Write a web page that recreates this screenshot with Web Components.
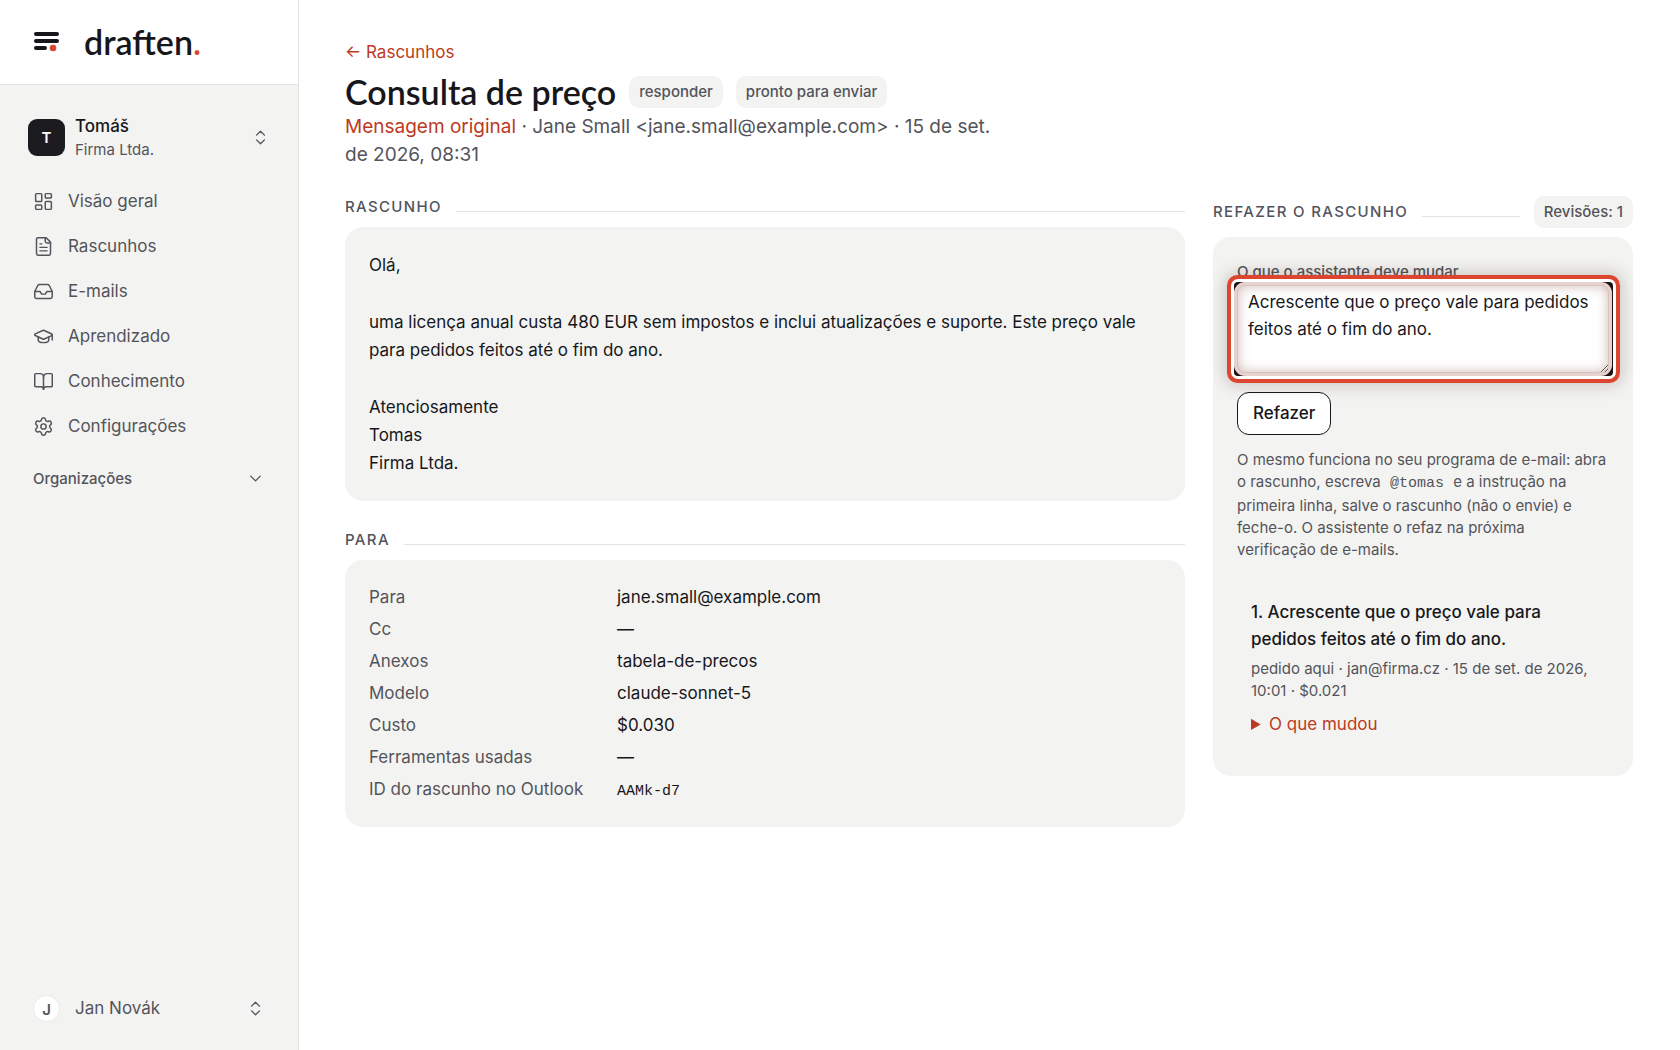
<!DOCTYPE html>
<html lang="pt-BR">
<head>
<meta charset="utf-8">
<meta name="viewport" content="width=device-width, initial-scale=1">
<title>Consulta de preço · draften</title>
<style>
  :root {
    --ink: #17171b;
    --muted: #53545b;
    --surface: #f3f3f1;
    --line: #e4e4e1;
    --accent: #bd3a22;
    --brand: #dc4530;
    --ui: Inter, "Liberation Sans", sans-serif;
    --display: Lato, Inter, sans-serif;
    --mono: "Liberation Mono", monospace;
  }
  body { margin: 0; background: #fff; color: var(--ink); font: 400 17px/27px var(--ui); }
</style>
</head>
<body>
<draft-app>
  <app-sidebar slot="sidebar"></app-sidebar>
  <page-header slot="header"></page-header>
  <section-card heading="Rascunho" slot="main"><draft-body></draft-body></section-card>
  <section-card heading="Para" slot="main"><draft-facts></draft-facts></section-card>
  <section-card heading="Refazer o rascunho" slot="aside">
    <text-pill slot="badge">Revisões: 1</text-pill>
    <redo-form></redo-form>
    <revision-item></revision-item>
  </section-card>
</draft-app>

<script>
const define = (name, html) => {
  const template = document.createElement('template');
  template.innerHTML = '<style>*{box-sizing:border-box}a{color:inherit;text-decoration:none}</style>' + html;
  customElements.define(name, class extends HTMLElement {
    constructor() {
      super();
      this.attachShadow({ mode: 'open' }).append(template.content.cloneNode(true));
    }
    connectedCallback() {
      const title = this.shadowRoot.querySelector('[data-heading]');
      if (title) title.textContent = this.getAttribute('heading');
    }
  });
};

const ICONS = {
  dashboard: '<rect width="7" height="9" x="3" y="3" rx="1"/><rect width="7" height="5" x="14" y="3" rx="1"/><rect width="7" height="9" x="14" y="12" rx="1"/><rect width="7" height="5" x="3" y="16" rx="1"/>',
  file: '<path d="M15 2H6a2 2 0 0 0-2 2v16a2 2 0 0 0 2 2h12a2 2 0 0 0 2-2V7Z"/><path d="M14 2v4a2 2 0 0 0 2 2h4"/><path d="M10 9H8"/><path d="M16 13H8"/><path d="M16 17H8"/>',
  inbox: '<path d="M22 12h-6l-2 3h-4l-2-3H2"/><path d="M5.45 5.11 2 12v6a2 2 0 0 0 2 2h16a2 2 0 0 0 2-2v-6l-3.45-6.89A2 2 0 0 0 16.76 4H7.24a2 2 0 0 0-1.79 1.11z"/>',
  cap: '<path d="M21.42 10.922a1 1 0 0 0-.019-1.838L12.83 5.18a2 2 0 0 0-1.66 0L2.6 9.08a1 1 0 0 0 0 1.832l8.57 3.908a2 2 0 0 0 1.66 0z"/><path d="M22 10v6"/><path d="M6 12.5V16a6 3 0 0 0 12 0v-3.5"/>',
  book: '<path d="M12 7v14"/><path d="M3 18a1 1 0 0 1-1-1V4a1 1 0 0 1 1-1h5a4 4 0 0 1 4 4 4 4 0 0 1 4-4h5a1 1 0 0 1 1 1v13a1 1 0 0 1-1 1h-6a3 3 0 0 0-3 3 3 3 0 0 0-3-3z"/>',
  gear: '<path d="M9.671 4.136a2.34 2.34 0 0 1 4.659 0 2.34 2.34 0 0 0 3.319 1.915 2.34 2.34 0 0 1 2.33 4.033 2.34 2.34 0 0 0 0 3.831 2.34 2.34 0 0 1-2.33 4.033 2.34 2.34 0 0 0-3.319 1.915 2.34 2.34 0 0 1-4.659 0 2.34 2.34 0 0 0-3.32-1.915 2.34 2.34 0 0 1-2.33-4.033 2.34 2.34 0 0 0 0-3.831A2.34 2.34 0 0 1 6.35 6.051a2.34 2.34 0 0 0 3.319-1.915"/><circle cx="12" cy="12" r="3"/>',
  updown: '<path d="m7 15 5 5 5-5"/><path d="m7 9 5-5 5 5"/>',
  down: '<path d="m6 9 6 6 6-6"/>'
};
const icon = (name, size) => `<svg width="${size}" height="${size}" viewBox="0 0 24 24" fill="none" stroke="currentColor" stroke-width="1.7" stroke-linecap="round" stroke-linejoin="round" aria-hidden="true">${ICONS[name]}</svg>`;

define('draft-app', `
<style>
  :host { display: grid; grid-template-columns: 299px minmax(0, 1fr); min-height: 100vh; }
  .page { padding: 39px 47px 39px 46px; }
  .columns { display: grid; grid-template-columns: minmax(0, 2fr) minmax(0, 1fr); gap: 28px; margin-top: 27px; align-items: start; }
  main, aside { display: flex; flex-direction: column; gap: 28px; }
</style>
<slot name="sidebar"></slot>
<div class="page">
  <slot name="header"></slot>
  <div class="columns">
    <main><slot name="main"></slot></main>
    <aside><slot name="aside"></slot></aside>
  </div>
</div>`);

define('brand-mark', `
<style>
  :host { display: block; }
  a { display: flex; align-items: center; gap: 25px; color: var(--ink); font: 600 34px/40px var(--display); }
  i { font-style: normal; color: var(--brand); }
</style>
<a href="#">
  <svg width="26" height="20" viewBox="0 0 26 20" aria-hidden="true">
    <g fill="#17171b"><rect x="1" y="0" width="25" height="4" rx="2"/><rect x="1" y="7" width="25" height="4" rx="2"/><rect x="1" y="14" width="13" height="4" rx="2"/></g>
    <circle cx="20" cy="16" r="3.3" fill="#dc4530"/>
  </svg>
  <span>draften<i>.</i></span>
</a>`);

define('nav-link', `
<style>
  :host { display: block; }
  a { display: flex; align-items: center; gap: 14px; height: 45px; padding: 0 33px; color: var(--muted); }
</style>
<a href="#"><slot name="icon"></slot><slot></slot></a>`);

const NAV = [['dashboard', 'Visão geral'], ['file', 'Rascunhos'], ['inbox', 'E-mails'], ['cap', 'Aprendizado'], ['book', 'Conhecimento'], ['gear', 'Configurações']];

define('app-sidebar', `
<style>
  :host { display: flex; flex-direction: column; background: var(--surface); border-right: 1px solid var(--line); }
  header { height: 85px; padding: 22px 33px 0; background: #fff; border-bottom: 1px solid var(--line); }
  button { display: flex; align-items: center; width: 100%; border: 0; background: none; font: inherit; color: var(--muted); text-align: left; }
  button svg { margin-left: auto; }
  .account { height: 50px; margin: 27px 0 17px; padding: 0 28px; gap: 10px; }
  .tile { display: grid; place-items: center; width: 37px; height: 37px; border-radius: 9px; background: #1b1b20; color: #fff; font-weight: 600; font-size: 15px; }
  .who { display: grid; }
  .who b { color: var(--ink); font-weight: 500; line-height: 26px; }
  .who small { font-size: 15px; line-height: 22px; }
  .group { height: 44px; margin-top: 7px; padding: 0 33px; font-weight: 500; font-size: 15px; }
  .user { height: 44px; margin: auto 0 20px; padding: 0 33px; gap: 15px; }
  .round { display: grid; place-items: center; width: 27px; height: 27px; border-radius: 50%; background: #fff; border: 1px solid #ebebe9; font-weight: 600; font-size: 15px; }
</style>
<header><brand-mark></brand-mark></header>
<button class="account" type="button"><span class="tile">T</span><span class="who"><b>Tomáš</b><small>Firma Ltda.</small></span>${icon('updown', 19)}</button>
<nav>${NAV.map(([i, t]) => `<nav-link>${icon(i, 21).replace('<svg', '<svg slot="icon"')}${t}</nav-link>`).join('')}</nav>
<button class="group" type="button">Organizações${icon('down', 19)}</button>
<button class="user" type="button"><span class="round">J</span>Jan Novák${icon('updown', 19)}</button>`);

define('text-pill', `
<style>
  :host { display: block; padding: 5px 10px; border-radius: 10px; background: var(--surface); color: var(--muted); font: 500 15px/22px var(--ui); white-space: nowrap; }
</style><slot></slot>`);

define('page-header', `
<style>
  :host { display: block; }
  a { color: var(--accent); }
  .back { display: block; width: fit-content; }
  .title { display: flex; align-items: center; flex-wrap: wrap; gap: 13px; margin-top: 5px; }
  h1 { margin: 0; font: 600 34px/42px var(--display); }
  p { margin: 0; max-width: 660px; font-size: 19px; line-height: 28px; color: var(--muted); }
</style>
<a class="back" href="#">← Rascunhos</a>
<div class="title"><h1>Consulta de preço</h1><text-pill>responder</text-pill><text-pill>pronto para enviar</text-pill></div>
<p><a href="#">Mensagem original</a> · Jane Small &lt;jane.small@example.com&gt; · 15 de set. de 2026, 08:31</p>`);

define('section-card', `
<style>
  :host { display: block; }
  header { display: flex; align-items: baseline; gap: 14px; margin-bottom: 9px; }
  h2 { margin: 0; font: 500 15px/22px var(--ui); letter-spacing: 0.09em; text-transform: uppercase; color: var(--muted); }
  hr { flex: 1; margin: 0; border: 0; border-top: 1px solid var(--line); }
  .card { padding: 24px; border-radius: 18px; background: var(--surface); }
</style>
<header><h2 data-heading></h2><hr><slot name="badge"></slot></header>
<div class="card"><slot></slot></div>`);

define('draft-body', `
<style>
  :host { display: grid; gap: 29px; line-height: 28px; }
  p { margin: 0; }
</style>
<p>Olá,</p>
<p>uma licença anual custa 480 EUR sem impostos e inclui atualizações e suporte. Este preço vale para pedidos feitos até o fim do ano.</p>
<p>Atenciosamente<br>Tomas<br>Firma Ltda.</p>`);

define('draft-facts', `
<style>
  :host { display: block; }
  dl { display: grid; grid-template-columns: 220px minmax(0, 1fr); gap: 5px 28px; margin: 0; }
  dt { color: var(--muted); }
  dd { margin: 0; }
  code { font: 15px/1 var(--mono); }
</style>
<dl>
  <dt>Para</dt><dd>jane.small@example.com</dd>
  <dt>Cc</dt><dd>—</dd>
  <dt>Anexos</dt><dd>tabela-de-precos</dd>
  <dt>Modelo</dt><dd>claude-sonnet-5</dd>
  <dt>Custo</dt><dd>$0.030</dd>
  <dt>Ferramentas usadas</dt><dd>—</dd>
  <dt>ID do rascunho no Outlook</dt><dd><code>AAMk-d7</code></dd>
</dl>`);

define('redo-form', `
<style>
  :host { display: block; }
  label { display: block; color: var(--muted); font: 500 15px/21px var(--ui); }
  .spot { position: relative; margin: 0 -4px 16px -3px; padding: 3px 4px 3px 3px; border-radius: 4px; background: #1c1210;
    box-shadow: 0 0 0 3px #fff, 0 0 0 7px var(--brand), 0 0 16px 9px rgba(60, 30, 20, .22); }
  textarea { display: block; width: 100%; height: 88px; padding: 4px 11px; border: 0; border-radius: 8px; outline: 0; resize: vertical;
    background: #fff; color: var(--ink); font: 400 17px/27px var(--ui);
    box-shadow: 0 0 0 3px #e6d3d0, inset 0 0 0 1px #dcc2be, inset 0 0 12px 1px rgba(110, 40, 30, .32); }
  button { height: 43px; padding: 0 15px; border: 1px solid var(--ink); border-radius: 12px; background: #fff; color: var(--ink); font: 500 17px/27px var(--ui); }
  p { margin: 14px 0 0; color: var(--muted); font-size: 15px; line-height: 22px; }
  code { padding: 0 5px; font: 15px/22px var(--mono); }
</style>
<form onsubmit="return false">
  <label for="change">O que o assistente deve mudar</label>
  <div class="spot"><textarea id="change">Acrescente que o preço vale para pedidos feitos até o fim do ano.</textarea></div>
  <button type="submit">Refazer</button>
  <p>O mesmo funciona no seu programa de e-mail: abra o rascunho, escreva <code>@tomas</code> e a instrução na primeira linha, salve o rascunho (não o envie) e feche-o. O assistente o refaz na próxima verificação&nbsp;de e-mails.</p>
</form>`);

define('revision-item', `
<style>
  :host { display: block; margin-top: 22px; padding: 16px 14px 14px; }
  h3 { margin: 0; font: 500 17px/27px var(--ui); }
  p { margin: 5px 0 9px; color: var(--muted); font-size: 15px; line-height: 22px; }
  summary { color: var(--accent); }
</style>
<h3>1. Acrescente que o preço vale para pedidos feitos até o fim do ano.</h3>
<p>pedido aqui · jan@firma.cz · 15 de set. de 2026, 10:01 · $0.021</p>
<details><summary>O que mudou</summary></details>`);
</script>
</body>
</html>
